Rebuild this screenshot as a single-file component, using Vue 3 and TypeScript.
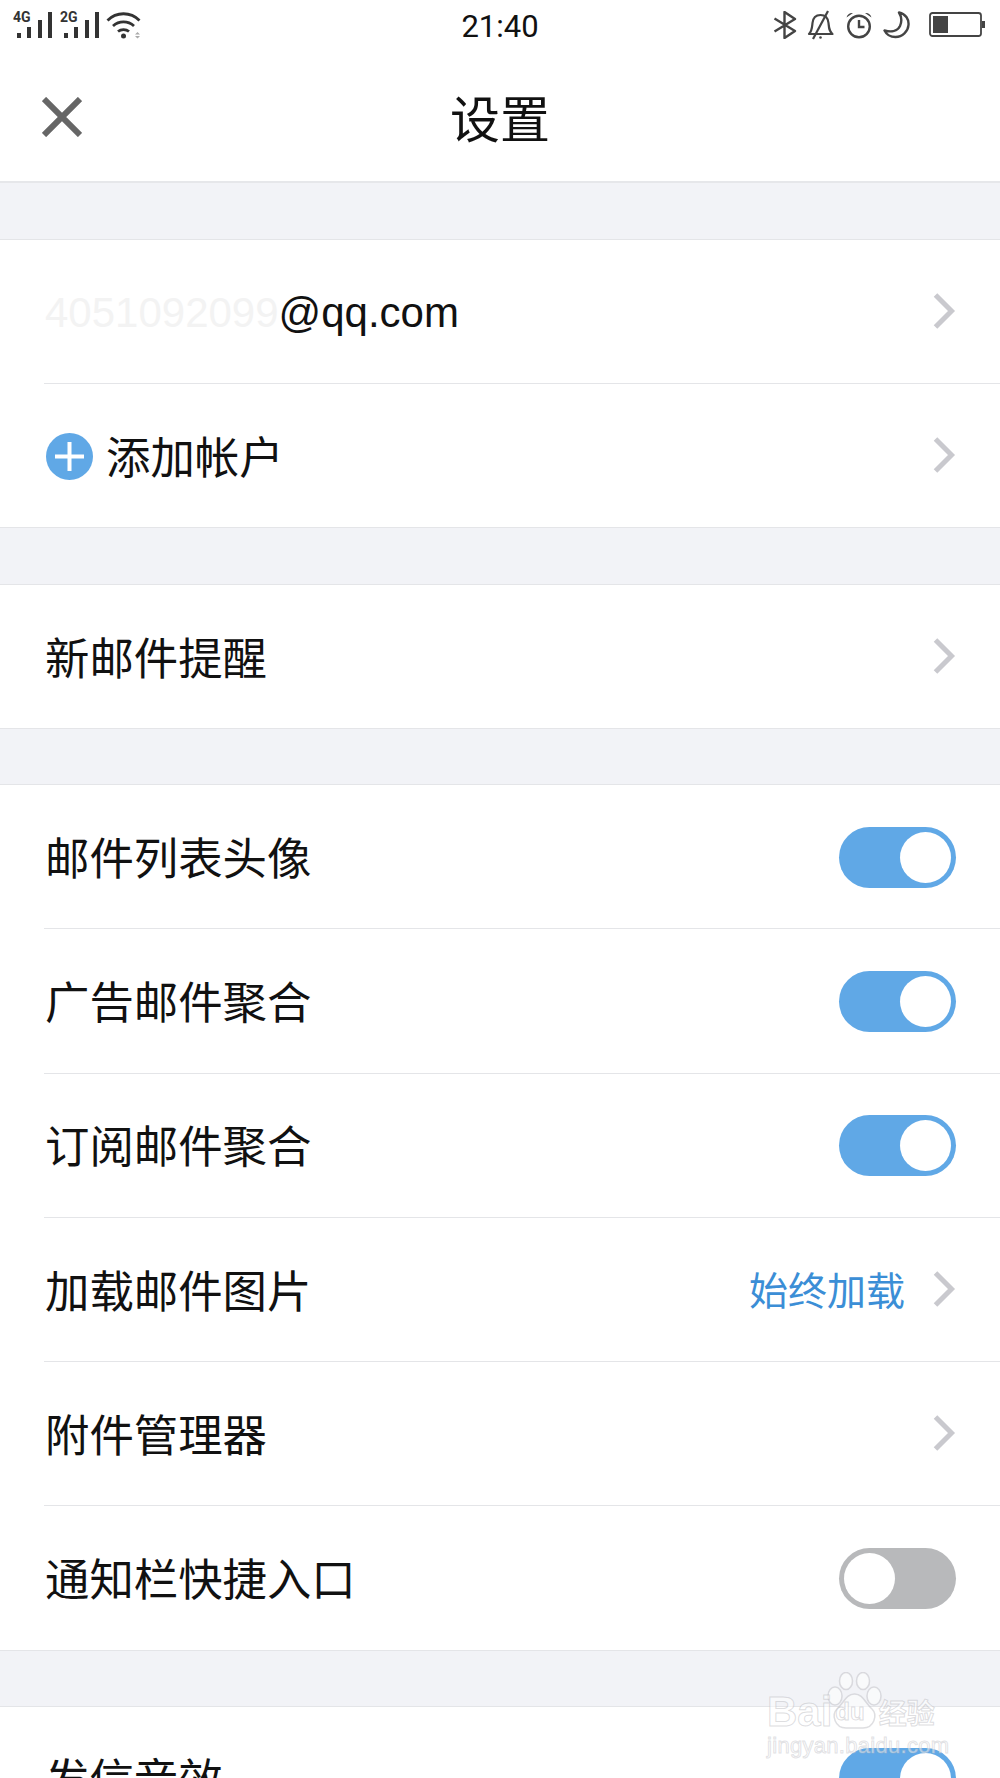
<script setup lang="ts">
interface Row {
  label: string;
  kind: 'chevron' | 'on' | 'off' | 'value' | 'add';
  value?: string;
}
const groups: Row[][] = [
  [{ label: '添加帐户', kind: 'add' }],
  [{ label: '新邮件提醒', kind: 'chevron' }],
  [
    { label: '邮件列表头像', kind: 'on' },
    { label: '广告邮件聚合', kind: 'on' },
    { label: '订阅邮件聚合', kind: 'on' },
    { label: '加载邮件图片', kind: 'value', value: '始终加载' },
    { label: '附件管理器', kind: 'chevron' },
    { label: '通知栏快捷入口', kind: 'off' },
  ],
  [{ label: '发信音效', kind: 'on' }],
];
</script>

<template>
  <div class="page">
    <header class="status">
      <div class="status-left">
        <div class="signal">
          <span class="net">4G</span>
          <svg width="38" height="27" viewBox="0 0 38 27" class="bars">
            <rect x="2" y="21" width="4" height="5" fill="#333" />
            <rect x="12" y="15" width="4" height="11" fill="#333" />
            <rect x="23" y="8" width="4" height="18" fill="#333" />
            <rect x="33" y="0" width="4" height="26" fill="#333" />
          </svg>
        </div>
        <div class="signal second">
          <span class="net">2G</span>
          <svg width="38" height="27" viewBox="0 0 38 27" class="bars">
            <rect x="2" y="21" width="4" height="5" fill="#333" />
            <rect x="12" y="15" width="4" height="11" fill="#333" />
            <rect x="23" y="8" width="4" height="18" fill="#333" />
            <rect x="33" y="0" width="4" height="26" fill="#333" />
          </svg>
        </div>
        <svg class="wifi" width="36" height="28" viewBox="0 0 36 28" fill="none" stroke="#333">
          <path d="M1.500 9.500C10.500 .5 24.500 .5 33.500 9.500" stroke-width="2.800" />
          <path d="M7 15C13 9.500 22 9.500 28 15" stroke-width="2.800" />
          <path d="M12 20.500C15 18 20 18 23 20.500" stroke-width="2.800" />
          <circle cx="17.500" cy="25" r="2.500" fill="#333" stroke="none" />
          <path d="M29 23.500l2.500 -2.500 2.500 2.500zM29 25l2.500 2.500 2.500 -2.500z" fill="#aaa" stroke="none" />
        </svg>
      </div>
      <span class="time">21:40</span>
      <div class="status-right">
        <svg width="24" height="28" viewBox="0 0 24 28" fill="none" stroke="#444" stroke-width="2.400">
          <path d="M1.500 7.500L22 20 11.500 27V1L22 8 1.500 20.500" stroke-linejoin="round" />
        </svg>
        <svg width="28" height="30" viewBox="0 0 28 30" fill="none" stroke="#444" stroke-width="2.200">
          <path d="M2 24c3-3 3-6 3.500-11C6 8 9 5 13.500 5s7.500 3 8 8c.5 5 .5 8 4 11z" stroke-linejoin="round" />
          <path d="M21 1L6 29" />
          <circle cx="13.500" cy="27.500" r="1.300" fill="#444" stroke="none" />
        </svg>
        <svg width="28" height="28" viewBox="0 0 28 28" fill="none" stroke="#444" stroke-width="2.400">
          <circle cx="14" cy="15.500" r="10.800" />
          <path d="M14 9v7h5.500" />
          <path d="M1.500 6.500C2.500 3 5 1.500 8 2zM26.500 6.500C25.500 3 23 1.500 20 2z" fill="#444" stroke="none" />
        </svg>
        <svg width="27" height="28" viewBox="0 0 27 28" fill="none" stroke="#444" stroke-width="2.400">
          <path d="M16 1.500C23 3 26 8.500 25.500 14c-.5 6.500-6 12-13 12-5 0-9-2.500-11-6.500 7 2 13 .5 15.500-4.500 2-4.500 1.500-9.500-1-13.500z" stroke-linejoin="round" />
        </svg>
        <svg class="battery" width="56" height="26" viewBox="0 0 56 26" fill="none">
          <rect x="1" y="1" width="51" height="23" rx="2.500" stroke="#444" stroke-width="1.800" />
          <rect x="4" y="4" width="15" height="17" fill="#444" />
          <rect x="53" y="9" width="3" height="7" fill="#444" />
        </svg>
      </div>
    </header>

    <nav class="nav">
      <svg class="close" width="40" height="40" viewBox="0 0 40 40" fill="none" stroke="#666" stroke-width="6">
        <path d="M2 2L38 38M38 2L2 38" />
      </svg>
      <h1 class="title">设置</h1>
    </nav>

    <main class="list">
      <section v-for="(group, g) in groups" :key="g" class="group" :class="{ tall: group.length > 2 }">
        <div v-if="g === 0" class="row">
          <span class="email"><span class="ghost">4051092099</span>@qq.com</span>
          <svg class="chevron" width="24" height="38" viewBox="0 0 24 38" fill="none" stroke="#c9c9ce" stroke-width="5">
            <path d="M3.500 3L19.500 19 3.500 35" />
          </svg>
        </div>
        <div v-for="row in group" :key="row.label" class="row">
          <span v-if="row.kind === 'add'" class="plus">
            <svg width="47" height="47" viewBox="0 0 47 47">
              <circle cx="23.500" cy="23.500" r="23.500" fill="#60a8e6" />
              <path d="M9 23.500H38M23.500 9V38" stroke="#fff" stroke-width="4" />
            </svg>
          </span>
          <span class="label">{{ row.label }}</span>
          <span v-if="row.value" class="value">{{ row.value }}</span>
          <svg v-if="row.kind === 'chevron' || row.kind === 'value' || row.kind === 'add'" class="chevron" width="24" height="38" viewBox="0 0 24 38" fill="none" stroke="#c9c9ce" stroke-width="5">
            <path d="M3.500 3L19.500 19 3.500 35" />
          </svg>
          <span v-if="row.kind === 'on' || row.kind === 'off'" class="toggle" :class="row.kind"><span class="knob"></span></span>
        </div>
      </section>
    </main>

    <div class="watermark">
      <svg class="paw" width="56" height="58" viewBox="0 0 56 58" fill="rgba(255,255,255,.55)" stroke="rgba(190,190,196,.5)" stroke-width="1.500">
        <ellipse cx="8" cy="24" rx="7" ry="9" />
        <ellipse cx="19" cy="9" rx="6.500" ry="8.500" />
        <ellipse cx="36" cy="9" rx="6.500" ry="8.500" />
        <ellipse cx="47" cy="24" rx="7" ry="9" />
        <path d="M27.500 22C36 22 38 31 45 37c6 6 2 19-9 19H19C8 56 4 43 10 37c7-6 9-15 17.500-15z" />
      </svg>
      <div class="mark-main"><span>Bai</span><span class="du">du</span><span class="jy">经验</span></div>
      <div class="mark-sub">jingyan.baidu.com</div>
    </div>
  </div>
</template>

<style scoped>
.page {
  position: relative;
  width: 1000px;
  height: 1778px;
  overflow: hidden;
  background: #f2f3f7;
  font-family: "Liberation Sans", "Noto Sans CJK SC", sans-serif;
  color: #111;
}
.status {
  position: relative;
  height: 50px;
  background: #fff;
  display: flex;
  align-items: center;
  justify-content: space-between;
  padding: 0 15px 0 15px;
  box-sizing: border-box;
}
.status-left {
  display: flex;
  align-items: flex-end;
  height: 30px;
  margin-top: -2px;
}
.signal {
  position: relative;
  width: 38px;
  height: 27px;
}
.second {
  margin-left: 9px;
}
.net {
  position: absolute;
  left: -2px;
  top: -2px;
  font-size: 14px;
  line-height: 14px;
  font-weight: 700;
  color: #333;
  font-family: "Roboto", sans-serif;
}
.bars {
  position: absolute;
  left: 0;
  top: 0;
}
.wifi {
  margin-left: 6px;
}
.time {
  position: absolute;
  left: 0;
  right: 0;
  top: 9px;
  text-align: center;
  font: 31px/36px "Roboto", sans-serif;
  color: #111;
}
.status-right {
  display: flex;
  align-items: center;
  gap: 10px;
  margin-top: -1px;
}
.battery {
  margin-left: 9px;
}
.nav {
  position: relative;
  height: 133px;
  box-sizing: border-box;
  background: #fff;
  border-bottom: 2px solid #e6e7ea;
  display: flex;
  align-items: center;
  justify-content: center;
}
.close {
  position: absolute;
  left: 42px;
  top: 47px;
}
.title {
  margin: 0;
  font-size: 50px;
  font-weight: 400;
  font-family: "Noto Sans CJK SC", sans-serif;
}
.list {
  padding-top: 56px;
  display: flex;
  flex-direction: column;
  gap: 55px;
}
.group {
  background: #fff;
  border-top: 1px solid #e4e5e8;
}
.group:first-child {
  margin-bottom: 1px;
}
.row {
  position: relative;
  height: 144px;
  box-sizing: border-box;
  display: flex;
  align-items: center;
  padding: 0 44px 0 45px;
  background: #fff;
}
.tall .row {
  height: 144.3px;
}
.row::after {
  content: "";
  position: absolute;
  left: 44px;
  right: 0;
  bottom: 0;
  height: 1px;
  background: #e4e5e8;
}
.row:last-child::after {
  left: 0;
}
.label {
  font-size: 44.4px;
  font-family: "Noto Sans CJK SC", sans-serif;
  flex: 1;
  margin-bottom: 4px;
}
.email {
  flex: 1;
  font-size: 42px;
  margin-top: 2px;
}
.ghost {
  color: #f3f3f3;
}
.plus {
  display: flex;
  margin-right: 13px;
  margin-top: 1px;
  margin-left: 1px;
}
.value {
  font-size: 39px;
  color: #3b8ed6;
  font-family: "Noto Sans CJK SC", sans-serif;
  margin-right: 27px;
  margin-bottom: 4px;
}
.chevron {
  flex-shrink: 0;
  margin-bottom: 2px;
}
.toggle {
  width: 117px;
  height: 61px;
  border-radius: 31px;
  display: flex;
  align-items: center;
  padding: 0 5px;
  box-sizing: border-box;
  flex-shrink: 0;
}
.toggle.on {
  background: #60a8e6;
  justify-content: flex-end;
}
.toggle.off {
  background: #b8b9bb;
  justify-content: flex-start;
}
.knob {
  width: 51px;
  height: 51px;
  border-radius: 50%;
  background: #fff;
}
.watermark {
  position: absolute;
  left: 767px;
  top: 1670px;
  width: 180px;
  height: 100px;
  pointer-events: none;
}
.paw {
  position: absolute;
  left: 60px;
  top: 2px;
}
.mark-main {
  position: absolute;
  left: 0;
  top: 14px;
  display: flex;
  align-items: center;
  font: 700 42px/56px "Liberation Sans", sans-serif;
  color: rgba(255, 255, 255, .5);
  -webkit-text-stroke: 1px rgba(180, 180, 186, .45);
  white-space: nowrap;
}
.du {
  font-size: 24px;
  margin-left: 3px;
}
.jy {
  font-size: 28px;
  font-family: "Noto Sans CJK SC", sans-serif;
  margin-left: 14px;
}
.mark-sub {
  position: absolute;
  left: 0;
  top: 63px;
  font: 22px/26px "Liberation Sans", sans-serif;
  color: rgba(255, 255, 255, .5);
  -webkit-text-stroke: 1px rgba(180, 180, 186, .4);
  letter-spacing: .3px;
  white-space: nowrap;
}
</style>

<style>
html,
body {
  margin: 0;
  background: #fff;
}
</style>
